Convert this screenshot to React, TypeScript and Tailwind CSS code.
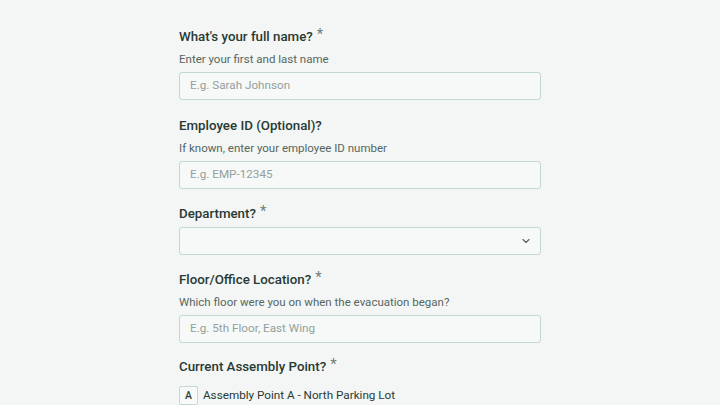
import React from "react";

const Title = ({ text, required }: { text: string; required?: boolean }) => (
  <div className="flex items-start h-5 text-[13.3px] leading-5 font-medium text-[#283a34]">
    <span>{text}</span>
    {required && <span className="ml-[4px] text-[15px] leading-[14px] text-[#6f807a] font-normal">*</span>}
  </div>
);

const Desc = ({ text }: { text: string }) => (
  <div className="mt-[4px] text-[11.5px] leading-4 text-[#56665f]">{text}</div>
);

const Input = ({ placeholder, className = "" }: { placeholder: string; className?: string }) => (
  <div
    className={`h-[28px] rounded-[3px] border border-[#c3d9d0] bg-[#f6f9f8] flex items-center px-[10px] text-[11.7px] text-[#949f9b] ${className}`}
  >
    {placeholder}
  </div>
);

export default function App() {
  return (
    <div
      className="w-[720px] h-[405px] overflow-hidden bg-[#f3f6f5]"
      style={{ fontFamily: "Roboto, 'Noto Sans', sans-serif" }}
    >
      <div className="ml-[179px] w-[362px] pt-[27px] flex flex-col">
        <Title text="What's your full name?" required />
        <Desc text="Enter your first and last name" />
        <Input placeholder="E.g. Sarah Johnson" className="mt-[5px]" />

        <div className="mt-[16px]">
          <Title text="Employee ID (Optional)?" />
        </div>
        <Desc text="If known, enter your employee ID number" />
        <Input placeholder="E.g. EMP-12345" className="mt-[5px]" />

        <div className="mt-[15px]">
          <Title text="Department?" required />
        </div>
        <div className="mt-[3px] h-[28px] rounded-[3px] border border-[#c3d9d0] bg-[#f6f9f8] flex items-center justify-end pr-[8px]">
          <svg width="12" height="12" viewBox="0 0 24 24" fill="none" stroke="#52625c" strokeWidth="2.2" strokeLinecap="round" strokeLinejoin="round">
            <path d="M6 9l6 6 6-6" />
          </svg>
        </div>

        <div className="mt-[15px]">
          <Title text="Floor/Office Location?" required />
        </div>
        <Desc text="Which floor were you on when the evacuation began?" />
        <Input placeholder="E.g. 5th Floor, East Wing" className="mt-[5px]" />

        <div className="mt-[14px]">
          <Title text="Current Assembly Point?" required />
        </div>
        <div className="mt-[9px] flex items-center">
          <div className="w-[19px] h-[19px] rounded-[2px] border border-[#c3d9d0] bg-[#f8faf9] flex items-center justify-center text-[10.5px] font-medium text-[#2e3f39]">
            A
          </div>
          <span className="ml-[5px] text-[11.7px] text-[#283a34]">Assembly Point A - North Parking Lot</span>
        </div>
      </div>
    </div>
  );
}
